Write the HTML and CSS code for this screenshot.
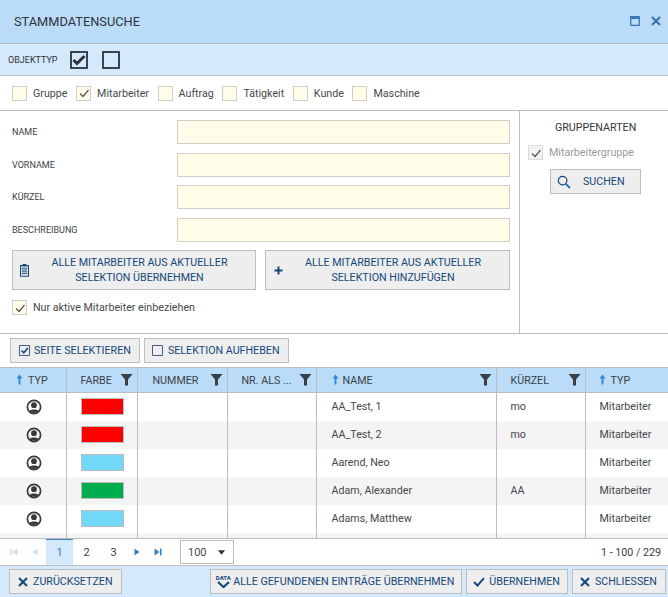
FILE: index.html
```html
<!DOCTYPE html>
<html lang="de">
<head>
<meta charset="utf-8">
<title>Stammdatensuche</title>
<link rel="stylesheet" href="styles.css">
</head>
<body>
<svg class="defs" width="0" height="0" aria-hidden="true">
  <symbol id="filter" viewBox="0 0 13 13"><path d="M0.5 1h12L8 6.5V12.5H5V6.5z" fill="#3a3f45"/></symbol>
  <symbol id="up" viewBox="0 0 7 11"><path d="M3.5 0.5L6.5 4.5H4.4V10.5H2.6V4.5H0.5z" fill="#2f86d6"/></symbol>
  <symbol id="user" viewBox="0 0 16 16"><circle cx="8" cy="8" r="6.6" fill="none" stroke="#3a3a3a" stroke-width="1.7"/><circle cx="8" cy="6.2" r="2.9" fill="#3a3a3a"/><path d="M3.2 12.2C4.2 9.8 11.8 9.8 12.8 12.2L12 13.8H4z" fill="#3a3a3a"/></symbol>
  <symbol id="x" viewBox="0 0 10 10"><path d="M1 1L9 9M9 1L1 9" stroke="#14487c" stroke-width="2.1" fill="none"/></symbol>
  <symbol id="tick" viewBox="0 0 12 12"><path d="M2 6.5L5 9.5L10.5 3" fill="none" stroke="#555" stroke-width="1.2"/></symbol>
</svg>

<header class="titlebar">
  <h1 class="title">STAMMDATENSUCHE</h1>
  <div class="window-actions">
    <svg width="10" height="10" viewBox="0 0 10 10"><path d="M0.7 0.7H9.3V9.3H0.7z" fill="none" stroke="#3b78b4" stroke-width="1.3"/><path d="M0.5 1H9.5V3H0.5z" fill="#3b78b4"/></svg>
    <svg width="10" height="10" viewBox="0 0 10 10"><path d="M1 1L9 9M9 1L1 9" stroke="#2f6da8" stroke-width="1.8" fill="none"/></svg>
  </div>
</header>

<section class="typeband">
  <span class="typelabel">OBJEKTTYP</span>
  <span class="bigcheck"><svg width="14" height="12" viewBox="0 0 14 12"><path d="M1.5 6L5 9.5L12.5 2" fill="none" stroke="#2b3037" stroke-width="3"/></svg></span>
  <span class="bigcheck bigcheck-second"></span>
</section>

<section class="typerow">
  <label class="opt"><span class="box"></span>Gruppe</label>
  <label class="opt"><span class="box"><svg class="tick"><use href="#tick"/></svg></span>Mitarbeiter</label>
  <label class="opt"><span class="box"></span>Auftrag</label>
  <label class="opt"><span class="box"></span>Tätigkeit</label>
  <label class="opt"><span class="box"></span>Kunde</label>
  <label class="opt"><span class="box"></span>Maschine</label>
</section>

<section class="search">
  <div class="form">
    <div class="field"><span class="flabel">NAME</span><span class="input"></span></div>
    <div class="field"><span class="flabel">VORNAME</span><span class="input"></span></div>
    <div class="field"><span class="flabel">KÜRZEL</span><span class="input"></span></div>
    <div class="field"><span class="flabel">BESCHREIBUNG</span><span class="input"></span></div>
    <div class="bigbuttons">
      <button class="btn bigbtn"><svg class="bigicon" width="9" height="14" viewBox="0 0 10 15"><path d="M0.6 2.6H9.4V14.4H0.6z" fill="none" stroke="#14487c" stroke-width="1.2"/><path d="M3 0.8H7V3.4H3z" fill="#14487c"/><path d="M2 5.5H8M2 7.5H8M2 9.5H8M2 11.5H8" stroke="#14487c" stroke-width="1"/></svg><span>ALLE MITARBEITER AUS AKTUELLER<br>SELEKTION ÜBERNEHMEN</span></button>
      <button class="btn bigbtn"><svg class="bigicon" width="9" height="9" viewBox="0 0 9 9"><path d="M4.5 0.5V8.5M0.5 4.5H8.5" stroke="#14487c" stroke-width="2"/></svg><span>ALLE MITARBEITER AUS AKTUELLER<br>SELEKTION HINZUFÜGEN</span></button>
    </div>
    <label class="opt activeopt"><span class="box"><svg class="tick"><use href="#tick"/></svg></span>Nur aktive Mitarbeiter einbeziehen</label>
  </div>
  <aside class="groups">
    <div class="groups-title">GRUPPENARTEN</div>
    <label class="opt disabled"><span class="box"><svg class="tick"><use href="#tick"/></svg></span>Mitarbeitergruppe</label>
    <button class="btn searchbtn"><svg width="14" height="14" viewBox="0 0 14 14"><circle cx="5.6" cy="5.6" r="4.3" fill="none" stroke="#14487c" stroke-width="1.2"/><path d="M8.8 8.8L13 13" stroke="#1f6db5" stroke-width="1.8"/></svg><span>SUCHEN</span></button>
  </aside>
</section>

<section class="selbar">
  <button class="btn selbtn"><svg width="11" height="11" viewBox="0 0 11 11"><path d="M0.5 0.5H10.5V10.5H0.5z" fill="none" stroke="#4a5a8a"/><path d="M2.5 5.5L4.8 7.8L8.8 3" fill="none" stroke="#14487c" stroke-width="1.6"/></svg>SEITE SELEKTIEREN</button>
  <button class="btn selbtn"><svg width="11" height="11" viewBox="0 0 11 11"><path d="M0.5 0.5H10.5V10.5H0.5z" fill="none" stroke="#4a5a8a"/></svg>SELEKTION AUFHEBEN</button>
</section>

<table class="grid">
  <colgroup><col class="c1"><col class="c2"><col class="c3"><col class="c4"><col class="c5"><col class="c6"><col class="c7"></colgroup>
  <thead>
    <tr>
      <th class="center"><svg class="up"><use href="#up"/></svg>TYP</th>
      <th><span class="hcell h-farbe">FARBE<svg class="filter"><use href="#filter"/></svg></span></th>
      <th><span class="hcell">NUMMER<svg class="filter"><use href="#filter"/></svg></span></th>
      <th><span class="hcell">NR. ALS ...<svg class="filter"><use href="#filter"/></svg></span></th>
      <th><span class="hcell"><span><svg class="up"><use href="#up"/></svg>NAME</span><svg class="filter"><use href="#filter"/></svg></span></th>
      <th><span class="hcell">KÜRZEL<svg class="filter"><use href="#filter"/></svg></span></th>
      <th><svg class="up"><use href="#up"/></svg>TYP</th>
    </tr>
  </thead>
  <tbody>
    <tr><td class="center"><svg class="user"><use href="#user"/></svg></td><td><span class="swatch red"></span></td><td></td><td></td><td>AA_Test, 1</td><td>mo</td><td>Mitarbeiter</td></tr>
    <tr><td class="center"><svg class="user"><use href="#user"/></svg></td><td><span class="swatch red"></span></td><td></td><td></td><td>AA_Test, 2</td><td>mo</td><td>Mitarbeiter</td></tr>
    <tr><td class="center"><svg class="user"><use href="#user"/></svg></td><td><span class="swatch sky"></span></td><td></td><td></td><td>Aarend, Neo</td><td></td><td>Mitarbeiter</td></tr>
    <tr><td class="center"><svg class="user"><use href="#user"/></svg></td><td><span class="swatch green"></span></td><td></td><td></td><td>Adam, Alexander</td><td>AA</td><td>Mitarbeiter</td></tr>
    <tr><td class="center"><svg class="user"><use href="#user"/></svg></td><td><span class="swatch sky"></span></td><td></td><td></td><td>Adams, Matthew</td><td></td><td>Mitarbeiter</td></tr>
    <tr class="clipped"><td></td><td></td><td></td><td></td><td></td><td></td><td></td></tr>
  </tbody>
</table>

<nav class="pager">
  <div class="pagenav">
    <svg class="pg" width="8" height="8" viewBox="0 0 8 8"><path d="M0.5 0.5H2V7.5H0.5zM7.5 0.5V7.5L2.5 4z" fill="#c4ddf3"/></svg>
    <svg class="pg pg-prev" width="6" height="8" viewBox="0 0 6 8"><path d="M5.5 0.5V7.5L0.5 4z" fill="#c4ddf3"/></svg>
    <span class="page current">1</span>
    <span class="page">2</span>
    <span class="page">3</span>
    <svg class="pg pg-next" width="6" height="8" viewBox="0 0 6 8"><path d="M0.5 0.5V7.5L5.5 4z" fill="#2f7fc9"/></svg>
    <svg class="pg pg-last" width="8" height="8" viewBox="0 0 8 8"><path d="M0.5 0.5V7.5L5.5 4zM6 0.5H7.5V7.5H6z" fill="#2f7fc9"/></svg>
  </div>
  <div class="pagesize"><span>100</span><svg width="7" height="5" viewBox="0 0 9 6"><path d="M0 0H9L4.5 6z" fill="#33302c"/></svg></div>
  <div class="pageinfo">1 - 100 / 229</div>
</nav>

<footer class="actions">
  <button class="btn actbtn"><svg class="xicon"><use href="#x"/></svg>ZURÜCKSETZEN</button>
  <div class="actions-right">
    <button class="btn actbtn"><span class="dataicon"><span class="datatext">DATA</span><svg width="13" height="7" viewBox="0 0 13 7"><path d="M1 1L6.5 6L12 1" fill="none" stroke="#14487c" stroke-width="2.2"/></svg></span>ALLE GEFUNDENEN EINTRÄGE ÜBERNEHMEN</button>
    <button class="btn actbtn"><svg width="12" height="10" viewBox="0 0 12 10"><path d="M1 5L4.5 8.5L11 1.2" fill="none" stroke="#14487c" stroke-width="1.9"/></svg>ÜBERNEHMEN</button>
    <button class="btn actbtn"><svg class="xicon"><use href="#x"/></svg>SCHLIESSEN</button>
  </div>
</footer>
</body>
</html>
```

FILE: styles.css
```css
* { box-sizing: border-box; }
html, body { margin: 0; padding: 0; }
body {
  width: 668px;
  height: 597px;
  overflow: hidden;
  background: #fff;
  font-family: Roboto, "Liberation Sans", sans-serif;
  font-size: 10.7px;
  color: #3c3c3c;
}
.defs { position: absolute; }
button { font-family: inherit; margin: 0; }

.titlebar {
  height: 44px;
  background: #badcf9;
  border-bottom: 1px solid #b3bcc4;
  display: flex;
  align-items: center;
  justify-content: space-between;
  padding: 0 7px 0 14px;
}
.title { margin: 0; font-size: 12.8px; font-weight: 400; color: #2f3338; }
.window-actions { display: flex; gap: 11px; margin-bottom: 2px; }

.typeband {
  height: 32px;
  background: #d5e9fd;
  border-bottom: 1px solid #b9bfc4;
  display: flex;
  align-items: center;
  padding-left: 8px;
}
.typelabel { font-size: 9px; color: #2f3338; width: 62px; }
.bigcheck {
  width: 18px;
  height: 18px;
  border: 2px solid #3d4450;
  display: flex;
  align-items: center;
  justify-content: center;
}
.bigcheck-second { margin-left: 14px; }

.typerow {
  height: 35px;
  border-bottom: 1px solid #bdbdbd;
  display: flex;
  align-items: center;
  padding-left: 12px;
}
.opt { display: flex; align-items: center; font-size: 10.7px; color: #45484c; }
.typerow .opt { margin-right: 8.6px; }
.box {
  width: 15px;
  height: 15px;
  border: 1px solid #cfcfc8;
  background: #fffde8;
  margin-right: 6px;
  display: flex;
  align-items: center;
  justify-content: center;
  flex: none;
}
.tick { width: 12px; height: 12px; }

.search { height: 223px; border-bottom: 1px solid #bdbdbd; display: flex; }
.form { width: 520px; border-right: 1px solid #bdbdbd; padding: 9px 9px 0 12px; }
.field { display: flex; align-items: center; height: 24px; margin-bottom: 8.5px; }
.flabel { width: 165px; font-size: 9px; color: #3c3f44; }
.input { flex: 1; height: 24px; background: #fffde8; border: 1px solid #cfcfc8; }
.bigbuttons { display: flex; gap: 9px; margin-top: 1px; }
.btn {
  background: #eeeeee;
  border: 1px solid #bdbdbd;
  color: #14487c;
  font-size: 10.7px;
  padding: 0;
  display: flex;
  align-items: center;
}
.bigbtn { width: 245px; height: 40px; line-height: 15px; position: relative; justify-content: center; }
.bigbtn:first-child { width: 244px; }
.bigbtn span { padding-left: 11px; }
.bigicon { position: absolute; left: 7px; top: 12px; }
.bigbtn + .bigbtn .bigicon { left: 8px; top: 15px; }
.activeopt { margin-top: 10px; }

.groups { flex: 1; display: flex; flex-direction: column; padding: 11px 0 0 8px; }
.groups-title { font-size: 10.7px; color: #33373c; line-height: 12px; margin-left: 27px; }
.disabled { color: #9a9a9a; margin-top: 11px; }
.disabled .box { background: #f2f2f2; border-color: #dcdcdc; }
.searchbtn { width: 91px; height: 25px; margin: 9px 0 0 22px; padding-left: 6px; }
.searchbtn span { margin-left: 12px; }

.selbar { height: 33px; display: flex; align-items: flex-start; gap: 4px; padding: 4px 0 0 10px; }
.selbtn { height: 25px; padding: 0 8px 0 7px; gap: 5px; }
.selbtn:first-child { padding-left: 8px; gap: 4px; }

.grid { width: 668px; border-collapse: collapse; table-layout: fixed; display: block; height: 171px; overflow: hidden; }
.c1 { width: 66px; } .c2 { width: 71px; } .c3 { width: 90px; } .c4 { width: 89px; }
.c5 { width: 180px; } .c6 { width: 89px; } .c7 { width: 83px; }
.grid th {
  height: 25px;
  background: #badcf9;
  border-top: 1px solid #bdbdbd;
  border-right: 1px solid #bdbdbd;
  border-bottom: 1px solid #bdbdbd;
  font-weight: 400;
  font-size: 10.7px;
  color: #3a3f45;
  text-align: left;
  padding: 0 4px 0 14px;
}
.grid th:first-child { padding-left: 16px; }
.grid th:nth-child(3) { padding-left: 15px; }
.grid th:nth-child(5) { padding-left: 15px; }
.grid th:last-child { border-right: 0; padding-left: 13px; }
.hcell { display: flex; align-items: center; justify-content: space-between; }
.up { width: 7px; height: 11px; margin-right: 5px; vertical-align: -1px; }
.grid th:nth-child(5) .up { margin-right: 4px; }
.filter { width: 13px; height: 13px; margin-bottom: 2px; }
.grid td {
  height: 28px;
  padding: 0 0 0 14px;
  border-right: 1px solid #bdbdbd;
  font-size: 10.7px;
  color: #45484c;
}
.grid td:nth-child(5) { padding-left: 15px; }
.grid td:first-child { padding: 0; text-align: center; }
.grid td:last-child { border-right: 0; }
.grid tbody tr:nth-child(even) td { background: #f4f4f4; }
.user { width: 16px; height: 16px; display: block; margin: 1px auto 0 26px; }
.swatch { display: block; width: 43px; height: 17px; border: 1px solid #bdbdbd; }
.red { background: #ff0000; }
.sky { background: #72d8f8; }
.green { background: #00ad4e; }

.pager {
  height: 28px;
  border-top: 1px solid #bdbdbd;
  border-bottom: 1px solid #bdbdbd;
  display: flex;
  align-items: center;
}
.pagenav { display: flex; align-items: center; height: 26px; padding-left: 10px; }
.pg-prev { margin-left: 14px; margin-right: 8px; }
.pg-next { margin-left: 7px; }
.pg-last { margin-left: 14px; }
.page { width: 27px; height: 26px; display: flex; align-items: center; justify-content: center; color: #3c3c3c; font-size: 11px; }
.current { background: #d5e9fd; border-top: 1px solid #3b82c4; color: #2f7fc9; }
.pagesize {
  margin-left: 18px;
  width: 54px;
  height: 24px;
  border: 1px solid #bdbdbd;
  display: flex;
  align-items: center;
  justify-content: space-between;
  padding: 0 8px 0 7px;
  font-size: 11px;
  color: #4a4540;
}
.pageinfo { margin-left: auto; padding-right: 7px; font-size: 10.7px; color: #3c3c3c; }

.actions {
  height: 31px;
  background: #d5e9fd;
  display: flex;
  justify-content: space-between;
  padding: 3px 2px 0 9px;
  align-items: flex-start;
}
.actions-right { display: flex; gap: 4px; }
.actbtn { height: 25px; padding: 0 7px 0 6px; gap: 3px; }
.actions-right .actbtn:nth-child(2) { gap: 4px; }
.actions > .actbtn { padding: 0 8px; gap: 5px; }
.actions-right .actbtn:last-child { padding: 0 8px 0 7px; gap: 5px; }
.xicon { width: 10px; height: 10px; }
.dataicon { display: flex; flex-direction: column; align-items: center; width: 14px; margin-left: -1px; }
.datatext { font-size: 6px; line-height: 6px; font-weight: 700; color: #14487c; }
```
